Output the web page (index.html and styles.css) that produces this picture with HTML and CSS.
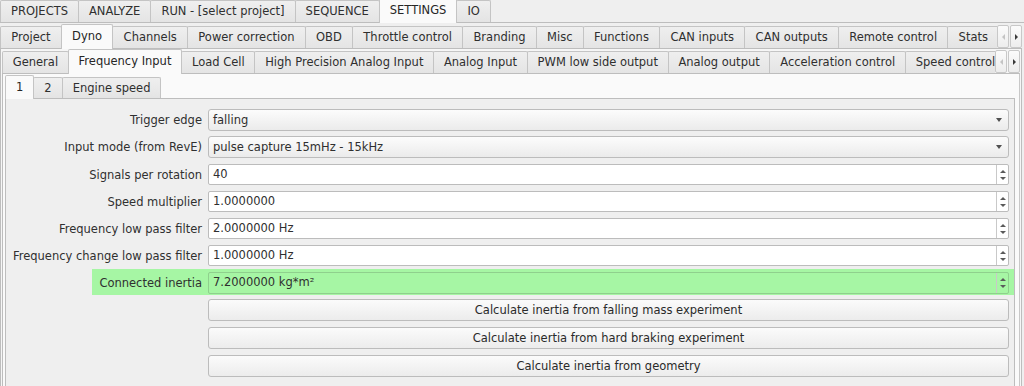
FILE: index.html
```html
<!DOCTYPE html>
<html lang="en">
<head>
  <meta charset="UTF-8" />
  <title>Settings - Dyno - Frequency Input</title>
  <link rel="stylesheet" href="styles.css">
</head>
<body>
  <div class="tabbar top">
    <div class="tab">PROJECTS</div>
    <div class="tab">ANALYZE</div>
    <div class="tab">RUN - [select project]</div>
    <div class="tab">SEQUENCE</div>
    <div class="tab on">SETTINGS</div>
    <div class="tab">IO</div>
  </div>
  <div class="pane pane1">
    <div class="tabbar second">
      <div class="strip">
        <div class="tab">Project</div>
        <div class="tab on">Dyno</div>
        <div class="tab">Channels</div>
        <div class="tab">Power correction</div>
        <div class="tab">OBD</div>
        <div class="tab">Throttle control</div>
        <div class="tab">Branding</div>
        <div class="tab">Misc</div>
        <div class="tab">Functions</div>
        <div class="tab">CAN inputs</div>
        <div class="tab">CAN outputs</div>
        <div class="tab">Remote control</div>
        <div class="tab">Stats</div>
      </div>
      <div class="arrows">
        <span class="arr"><i class="left"></i></span>
        <span class="arr"><i class="right"></i></span>
      </div>
    </div>
    <div class="pane pane2">
      <div class="tabbar third">
        <div class="strip">
          <div class="tab">General</div>
          <div class="tab on">Frequency Input</div>
          <div class="tab">Load Cell</div>
          <div class="tab">High Precision Analog Input</div>
          <div class="tab">Analog Input</div>
          <div class="tab">PWM low side output</div>
          <div class="tab">Analog output</div>
          <div class="tab">Acceleration control</div>
          <div class="tab">Speed control</div>
        </div>
        <div class="arrows">
          <span class="arr"><i class="left"></i></span>
          <span class="arr"><i class="right"></i></span>
        </div>
      </div>
      <div class="pane pane3">
        <div class="tabbar fourth">
          <div class="tab on">1</div>
          <div class="tab">2</div>
          <div class="tab">Engine speed</div>
        </div>
        <div class="pane pane4">
          <div class="form">
            <div class="row">
              <span class="lab">Trigger edge</span>
              <div class="combo"><span class="val">falling</span><i class="drop"></i></div>
            </div>
            <div class="row tight">
              <span class="lab">Input mode (from RevE)</span>
              <div class="combo"><span class="val">pulse capture 15mHz - 15kHz</span><i class="drop"></i></div>
            </div>
            <div class="row">
              <span class="lab">Signals per rotation</span>
              <div class="spin"><span class="val">40</span><span class="btns"><i class="up"></i><i class="down"></i></span></div>
            </div>
            <div class="row">
              <span class="lab">Speed multiplier</span>
              <div class="spin"><span class="val">1.0000000</span><span class="btns"><i class="up"></i><i class="down"></i></span></div>
            </div>
            <div class="row">
              <span class="lab">Frequency low pass filter</span>
              <div class="spin"><span class="val">2.0000000 Hz</span><span class="btns"><i class="up"></i><i class="down"></i></span></div>
            </div>
            <div class="row">
              <span class="lab">Frequency change low pass filter</span>
              <div class="spin"><span class="val">1.0000000 Hz</span><span class="btns"><i class="up"></i><i class="down"></i></span></div>
            </div>
            <div class="row hl">
              <span class="lab">Connected inertia</span>
              <div class="spin"><span class="val">7.2000000 kg*m²</span><span class="btns"><i class="up"></i><i class="down"></i></span></div>
            </div>
            <div class="row">
              <span class="lab"></span>
              <div class="btn">Calculate inertia from falling mass experiment</div>
            </div>
            <div class="row">
              <span class="lab"></span>
              <div class="btn">Calculate inertia from hard braking experiment</div>
            </div>
            <div class="row">
              <span class="lab"></span>
              <div class="btn">Calculate inertia from geometry</div>
            </div>
          </div>
        </div>
      </div>
    </div>
  </div>
</body>
</html>
```

FILE: styles.css
```css
html, body {
  margin: 0;
  padding: 0;
  background-color: #efefef;
  color: #2f2f2f;
  font-family: "DejaVu Sans", sans-serif;
  font-size: 11.5px;
  overflow: hidden;
}

/* tab bars */
.tabbar {
  display: flex;
  align-items: flex-end;
  height: 25px;
}
.tabbar.top {
  height: 22px;
}
.tabbar.third,
.tabbar.fourth {
  height: 24px;
}
.strip {
  flex: 1;
  min-width: 0;
  overflow: hidden;
  display: flex;
  align-items: flex-end;
  height: 100%;
  margin-bottom: -1px;
  padding-bottom: 1px;
  box-sizing: content-box;
}
.tab {
  flex: none;
  box-sizing: border-box;
  height: 22px;
  line-height: 21px;
  padding: 0 10px;
  margin-right: -1px;
  border: 1px solid #c4c4c4;
  border-bottom: none;
  border-radius: 2px 2px 0 0;
  background: linear-gradient(#efefef, #e4e4e4);
  white-space: nowrap;
}
.tabbar.second .tab {
  padding: 0 10.25px;
}
.tabbar.third .tab {
  padding: 0 9.75px;
}
.tab.on {
  height: 25px;
  line-height: 22px;
  margin-bottom: -1px;
  background: #fafafa;
  color: #262626;
  position: relative;
  z-index: 1;
}
.tabbar.fourth .tab {
  height: 21px;
  line-height: 20px;
}
.tabbar.fourth .tab.on {
  height: 24px;
  line-height: 22px;
}

/* scroll arrows */
.arrows {
  display: flex;
  gap: 1px;
  align-self: stretch;
  padding-top: 2px;
}
.tabbar.third .arrows {
  padding-top: 1px;
}
.arr {
  width: 12px;
  box-sizing: border-box;
  border: 1px solid #c8c8c8;
  border-radius: 2px;
  background: linear-gradient(#fbfbfb, #ededed);
  display: flex;
  align-items: center;
  justify-content: center;
}
.arr i {
  width: 0;
  height: 0;
  border-top: 3px solid transparent;
  border-bottom: 3px solid transparent;
}
.arr i.left {
  border-right: 3px solid #c4c4c4;
}
.arr i.right {
  border-left: 3px solid #3a3a3a;
}

/* tab panes */
.pane {
  border-top: 1px solid #bdbdbd;
}
.pane1 {
  padding-right: 2px;
}
.pane2 {
  border-left: 1px solid #bdbdbd;
  border-right: 1px solid #bdbdbd;
  padding: 0 1px;
  background: #f6f6f6;
}
.pane3 {
  border-left: 1px solid #bdbdbd;
  border-right: 1px solid #c8c8c8;
  padding: 0 4px 0 2px;
  background: #fafafa;
}
.pane4 {
  border: 1px solid #bdbdbd;
  border-bottom: none;
  background: #efefef;
  height: 300px;
}

/* form */
.form {
  display: flex;
  flex-direction: column;
  gap: 6px;
  padding: 10px 5px 12px 2px;
}
.row {
  display: flex;
  align-items: center;
  gap: 6px;
}
.row.tight {
  margin-top: -1px;
}
.lab {
  flex: none;
  width: 194px;
  text-align: right;
  white-space: nowrap;
  color: #303030;
}
.row.hl {
  margin: -3px -5px -2px 84px;
  padding: 3px 5px 1px 0;
  background: #a6f6a4;
}
.row.hl .lab {
  width: 110px;
}
.combo,
.spin,
.btn {
  flex: 1;
  box-sizing: border-box;
  border: 1px solid #bcbcbc;
  border-radius: 3px;
  display: flex;
  align-items: center;
}
.combo {
  height: 22px;
  background: linear-gradient(#fcfcfc, #ebebeb);
}
.val {
  flex: 1;
  padding-left: 4px;
  white-space: nowrap;
}
.drop {
  width: 0;
  height: 0;
  margin-right: 6px;
  border-left: 3px solid transparent;
  border-right: 3px solid transparent;
  border-top: 4px solid #505050;
}
.spin {
  height: 21px;
  background: #fff;
  border-radius: 2px;
  align-items: stretch;
}
.spin .val {
  line-height: 19px;
}
.row.hl .spin {
  height: 22px;
  background: #a6f6a4;
  border-color: #8fd08d;
}
.btns {
  flex: none;
  width: 11px;
  border-left: 1px solid #c9c9c9;
  display: flex;
  flex-direction: column;
  align-items: center;
  justify-content: center;
  gap: 4px;
}
.btns i {
  width: 0;
  height: 0;
  border-left: 3px solid transparent;
  border-right: 3px solid transparent;
}
.btns i.up {
  border-bottom: 3px solid #5a5a5a;
}
.btns i.down {
  border-top: 3px solid #5a5a5a;
}
.btn {
  height: 22px;
  justify-content: center;
  background: linear-gradient(#fbfbfb, #ececec);
  color: #2a2a2a;
}
```
